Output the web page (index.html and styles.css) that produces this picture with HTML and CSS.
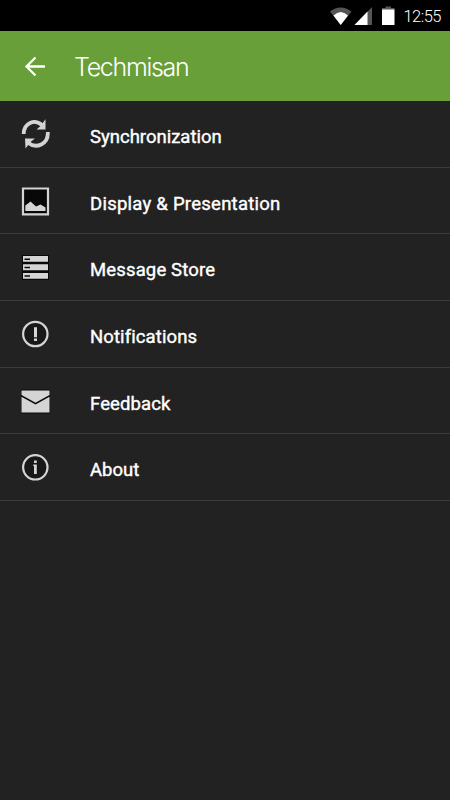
FILE: index.html
```html
<!DOCTYPE html>
<html lang="en">
<head>
<meta charset="utf-8">
<title>Techmisan</title>
<link rel="stylesheet" href="styles.css">
</head>
<body>
<div class="status">
  <svg class="signals" width="68" height="20" viewBox="0 0 68 20">
    <path fill="#555" d="M0 5.500Q10.500-2.500 21.500 5.500L10.700 19Z"/>
    <path fill="#fff" d="M3.500 9.500Q10.700 2.500 18 9.500L10.700 19Z"/>
    <path fill="#555" d="M42 1V19H24.500Z"/>
    <path fill="#fff" d="M37.500 5.600V19H24.500Z"/>
    <path fill="#555" d="M55.500 .5H61V2H64.500V4H52V2H55.500Z"/>
    <path fill="#fff" d="M52 3.500H64.500V19H52Z"/>
  </svg>
  <span class="clock">12:55</span>
</div>
<header class="bar">
  <svg class="back" width="22" height="22" viewBox="0 0 22 22"><path d="M21 10.500H2.500M11.500 1.500L2.500 10.500L11.500 19.500"/></svg>
  <h1 class="title">Techmisan</h1>
</header>
<ul class="menu">
  <li class="row">
    <svg class="icon" viewBox="0 0 30 30">
      <path class="thick" d="M3.700 15C3.700 4 14.500-.5 22 6.200M27.800 13C28.500 25.500 16 30 8.500 24"/>
      <path class="solid" d="M25.500 .2V10.500H16.500L20 7.500ZM5 19.500H15L11 22.500L5.500 29.500Z"/>
    </svg>
    <span class="label sync">Synchronization</span>
  </li>
  <li class="row">
    <svg class="icon" viewBox="0 0 30 30">
      <path class="dark" d="M2.500 2.500H27.500V27.500H2.500Z"/>
      <path class="frame" d="M3 2.500H28V28.300H3Z"/>
      <path class="solid" d="M5.300 19.500L8 17.500L10.500 15.500L16 20.500L20.500 18.500L25.500 21.500V25H5.300Z"/>
    </svg>
    <span class="label display">Display &amp; Presentation</span>
  </li>
  <li class="row">
    <svg class="icon" viewBox="0 0 30 30">
      <path class="dark" d="M2 3H29V28H2Z"/>
      <path class="solid" d="M3 4H28V9.800H3ZM3 12.300H28V18.300H3ZM3 21H28V26.800H3Z"/>
      <path class="dark" d="M4.500 6.500H10V8H4.500ZM4.500 14.800H10V16.300H4.500ZM4.500 23.300H10V24.800H4.500Z"/>
    </svg>
    <span class="label store">Message Store</span>
  </li>
  <li class="row">
    <svg class="icon" viewBox="0 0 30 30">
      <circle class="ring" cx="15.300" cy="15" r="12.200"/>
      <path class="solid" d="M14 8.200H17V18.200H14ZM14 19.500H17V22H14Z"/>
    </svg>
    <span class="label notify">Notifications</span>
  </li>
  <li class="row">
    <svg class="icon" viewBox="0 0 30 30">
      <path class="dark" d="M1 3.500H30V27.500H1Z"/>
      <path class="solid" d="M1.500 4.500H29.500V9L15.500 16.800L1.500 9ZM1.500 10.700L15.500 18.500L29.500 10.700V26.500H1.500Z"/>
    </svg>
    <span class="label feedback">Feedback</span>
  </li>
  <li class="row">
    <svg class="icon" viewBox="0 0 30 30">
      <circle class="ring" cx="15.300" cy="15.300" r="12.200"/>
      <path class="solid" d="M14 8.500H16.800V11H14ZM13.300 12.500H16.800V22H14V14H13.300Z"/>
    </svg>
    <span class="label about">About</span>
  </li>
</ul>
</body>
</html>
```
FILE: styles.css
```css
* { box-sizing: border-box; }
body {
  margin: 0;
  height: 800px;
  overflow: hidden;
  background: #222;
  color: #fff;
  font-family: Roboto, "Liberation Sans", sans-serif;
}
.status {
  display: flex;
  justify-content: flex-end;
  height: 31px;
  padding: 6px 9px 0 0;
  background: #000;
}
.signals { flex: none; margin-right: 5px; }
.clock { font-size: 16.500px; font-weight: 300; line-height: 21px; letter-spacing: -.5px; }
.bar {
  display: flex;
  align-items: center;
  height: 70px;
  padding: 2px 0 0 24px;
  background: #689f38;
}
.back { fill: none; stroke: #fff; stroke-width: 2.300; }
.title {
  margin: 0 0 0 28px;
  font-family: Inter, sans-serif;
  font-size: 25px;
  font-weight: 300;
  line-height: 32px;
  letter-spacing: -1.300px;
}
.menu { margin: 0; padding: 0; list-style: none; }
.row {
  display: flex;
  align-items: center;
  height: 66.700px;
  padding: 0 0 0 20px;
  border-bottom: 1px solid #3c3c3c;
}
.icon { flex: none; width: 30px; height: 30px; fill: #d4d4d4; }
.thick { fill: none; stroke: #d4d4d4; stroke-width: 3.800; }
.frame { fill: none; stroke: #d4d4d4; stroke-width: 2.200; }
.ring { fill: #181818; stroke: #d4d4d4; stroke-width: 2.200; }
.dark { fill: #080808; }
.label {
  margin: 6px 0 0 40px;
  font-size: 18.500px;
  font-weight: 400;
  line-height: 24px;
  white-space: nowrap;
  -webkit-text-stroke: .4px #fff;
}
.display { letter-spacing: .25px; }
.store { letter-spacing: .15px; }
.notify { letter-spacing: .1px; }
.feedback { letter-spacing: .1px; }
```
